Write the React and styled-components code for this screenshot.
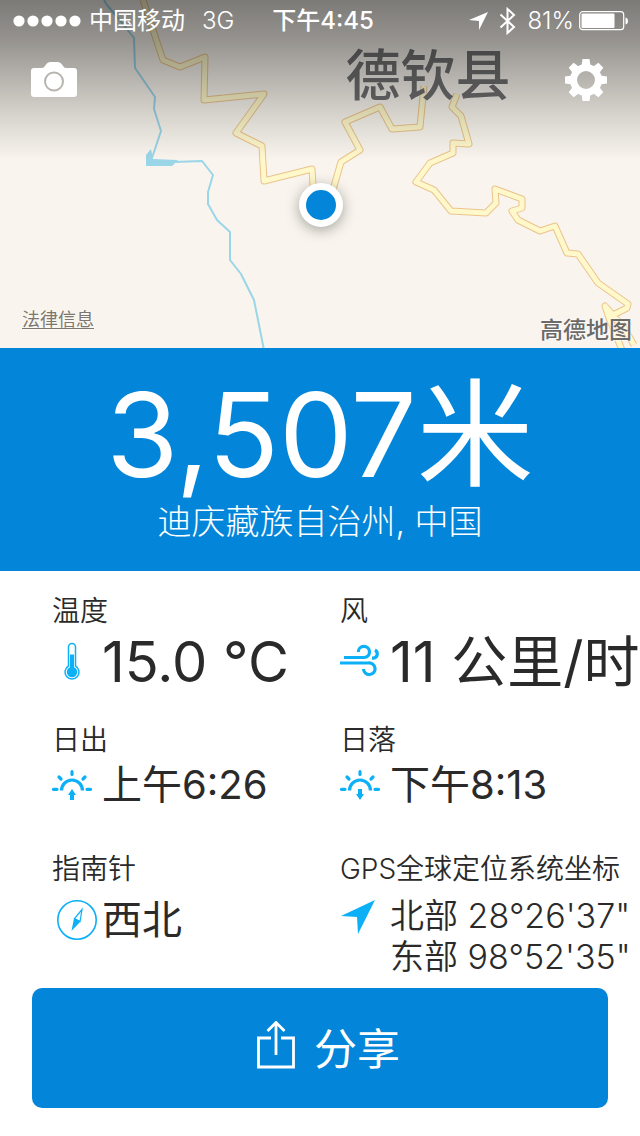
import React from 'react'
import styled, { createGlobalStyle, ThemeProvider } from 'styled-components'

const theme = {
  primary: '#0386d9',
  accent: '#0cb0f7',
  text: '#2a2a2a',
  land: '#f9f5ee',
}

const GlobalStyle = createGlobalStyle`
  * {
    box-sizing: border-box;
  }
  body {
    margin: 0;
    background: #fff;
    font-family: Inter, "Noto Sans CJK SC", sans-serif;
  }
`;

const Page = styled.main`
  min-height: 100vh;
  display: flex;
  flex-direction: column;
  overflow: hidden;
  color: ${({ theme }) => theme.text};
`;

const MapArea = styled.section`
  position: relative;
  min-height: 348px;
  display: flex;
  flex-direction: column;
  background: ${({ theme }) => theme.land};
`;

const MapCanvas = styled.svg`
  position: absolute;
  top: 0;
  left: 0;
  width: 100%;
  height: 100%;
`;

const TownName = styled.span`
  position: absolute;
  top: 37px;
  left: 54%;
  font-size: 55px;
  font-weight: 500;
  line-height: 76px;
  color: #707070;
  text-shadow: 0 0 3px rgba(255, 255, 255, 0.7);
`;

const Shade = styled.div`
  position: absolute;
  top: 0;
  left: 0;
  right: 0;
  height: 160px;
  background: linear-gradient(rgba(0, 0, 0, 0.5), rgba(0, 0, 0, 0.4) 25%, rgba(0, 0, 0, 0.15) 70%, rgba(0, 0, 0, 0));
`;

const Marker = styled.div`
  position: absolute;
  top: 183px;
  left: 50%;
  width: 44px;
  height: 44px;
  margin-left: -21px;
  border: 7px solid #fff;
  border-radius: 50%;
  background: ${({ theme }) => theme.primary};
  box-shadow: 0 3px 14px rgba(0, 0, 0, 0.35);
`;

const StatusBar = styled.header`
  position: relative;
  display: grid;
  grid-template-columns: 1fr auto 1fr;
  align-items: center;
  height: 42px;
  padding: 0 11px 0 13px;
  color: #fff;
  font-size: 24px;
  line-height: 42px;
`;

const StatusGroup = styled.div`
  display: flex;
  align-items: center;
  justify-content: ${({ $end }) => ($end ? 'flex-end' : 'flex-start')};
  gap: ${({ $end }) => ($end ? '11px' : '8px')};
`;

const Network = styled.span`
  margin-left: 9px;
  font-weight: 300;
`;

const Battery = styled.span`
  display: flex;
  align-items: center;
  gap: 5px;
  font-weight: 300;
`;

const Clock = styled.time`
  padding-left: 4px;
  font-weight: 500;
`;

const Toolbar = styled.nav`
  position: relative;
  display: flex;
  align-items: center;
  justify-content: space-between;
  height: 76px;
  padding: 0 32px 0 30px;
`;

const IconButton = styled.button`
  display: flex;
  padding: 0;
  border: 0;
  background: none;
  color: #fff;
`;

const MapFooter = styled.footer`
  position: relative;
  display: flex;
  align-items: flex-end;
  justify-content: space-between;
  margin-top: auto;
  padding: 0 8px 4px 22px;
`;

const LegalLink = styled.a`
  padding-bottom: 11px;
  font-size: 18px;
  line-height: 26px;
  color: #7d776f;
  text-underline-offset: 2px;
  text-shadow: 0 0 2px #fff;
`;

const Provider = styled.span`
  font-size: 23px;
  font-weight: 500;
  line-height: 28px;
  color: #6c6a68;
  text-shadow: 0 0 2px #fff, 0 0 2px #fff;
`;

const Summary = styled.section`
  padding: 22px 0 28px;
  background: ${({ theme }) => theme.primary};
  color: #fff;
  text-align: center;
`;

const Altitude = styled.h1`
  margin: 0;
  font-size: 117px;
  font-weight: 400;
  line-height: 130px;
  white-space: nowrap;
`;

const Place = styled.p`
  margin: 0;
  font-size: 34px;
  font-weight: 300;
  line-height: 43px;
`;

const Details = styled.dl`
  display: grid;
  grid-template-columns: repeat(2, minmax(0, 1fr));
  grid-auto-rows: minmax(129px, auto);
  margin: 0;
  padding: 23px 12px 7px 52px;
`;

const Cell = styled.div`
  white-space: nowrap;
`;

const Label = styled.dt`
  font-size: 28px;
  font-weight: 350;
  line-height: 34px;
`;

const sizes = {
  large: { font: 56, line: 68 },
  medium: { font: 40, line: 56 },
  tall: { font: 40, line: 68 },
};

const Value = styled.dd`
  display: flex;
  align-items: center;
  gap: 10px;
  margin: 0;
  font-size: ${({ $size }) => sizes[$size].font}px;
  line-height: ${({ $size }) => sizes[$size].line}px;
  font-weight: 400;

  svg {
    flex: none;
    overflow: visible;
    color: ${({ theme }) => theme.accent};
  }
`;

const Coordinates = styled.dd`
  display: flex;
  gap: 10px;
  margin: 0;
  padding-top: 9px;
  font-size: 34px;
  font-weight: 350;
  line-height: 41px;

  svg {
    flex: none;
    color: ${({ theme }) => theme.accent};
  }
`;

const Actions = styled.div`
  padding: 0 32px 28px;
`;

const ShareButton = styled.button`
  display: flex;
  align-items: center;
  justify-content: center;
  gap: 18px;
  width: 100%;
  height: 120px;
  padding: 0 0 4px 16px;
  border: 0;
  border-radius: 10px;
  background: ${({ theme }) => theme.primary};
  color: #fff;
  font-family: inherit;
  font-size: 43px;
  font-weight: 400;
`;

const road = [
  'M143 0 163 60 180 67 205 57 204 100 264 94 236 133 262 146 264 181 312 169 314 200',
  'M330 200 341 162 360 150 345 122 380 107 392 129 420 127 424 86',
  'M457 94 452 107 461 116 469 144 453 143 453 153 430 163 416 182 434 190 451 211 486 213 496 203 495 189 522 199 522 208 512 211 518 220 540 231 555 226 567 253 578 254 598 283 628 304 627 308 613 315 605 306 609 318 622 350',
  'M610 314 622 324 634 345',
].join(' ')

const MapDrawing = () => (
  <MapCanvas viewBox="0 0 640 348" preserveAspectRatio="xMidYMid slice" fill="none" strokeLinejoin="round" aria-hidden="true">
    <path d="M104 0 107 5 118 18 134 38 135 68 155 97 154 109 161 131 152 158M174 162 202 161 213 175 208 192 208 204 217 220 230 232 230 260 241 274 254 300 264 350" stroke="#9bd5e8" strokeWidth="2" />
    <path d="M146 166V155L151 149 153 159 178 160 172 166Z" fill="#9bd5e8" />
    <path d={road} stroke="#eac48d" strokeWidth="7" />
    <path d={road} stroke="#fff8cb" strokeWidth="5" />
  </MapCanvas>
)

const SignalDots = () => (
  <svg width="68" height="12" fill="currentColor" aria-hidden="true">
    {[6, 20, 34, 48, 62].map((x) => <circle key={x} cx={x} cy="6" r="5.6" />)}
  </svg>
)

const LocationIcon = () => (
  <svg width="19" height="20" viewBox="0 0 19 20" fill="currentColor" aria-hidden="true">
    <path d="M0 9 19 1 10 19V10Z" />
  </svg>
)

const BluetoothIcon = () => (
  <svg width="17" height="28" viewBox="0 0 17 28" fill="none" stroke="currentColor" strokeWidth="2" aria-hidden="true">
    <path d="M1.500 7.500 15 20 8.500 26V2L15 8 1.500 20.500" />
  </svg>
)

const BatteryIcon = () => (
  <svg width="50" height="20" viewBox="0 0 50 20" aria-hidden="true">
    <rect x=".7" y=".7" width="44" height="18" rx="3" fill="none" stroke="currentColor" strokeWidth="1.200" />
    <rect x="2.500" y="2.500" width="33" height="14.500" rx="1" fill="currentColor" />
    <path d="M46.500 6.500Q49 7 49 10T46.500 13.500Z" fill="currentColor" />
  </svg>
)

const CameraIcon = () => (
  <svg width="48" height="36" viewBox="0 0 48 36" aria-hidden="true">
    <path d="M4 6H12Q14 6 15 4L16 2.500Q17.500 0 20 0H28Q30.500 0 32 2.500L33 4Q34 6 36 6H44Q47 6 47 9V32Q47 35 44 35H4Q1 35 1 32V9Q1 6 4 6Z" fill="currentColor" />
    <circle cx="24" cy="19.500" r="9" fill="none" stroke="#b7b4b0" strokeWidth="2" />
  </svg>
)

const GearIcon = () => (
  <svg width="44" height="44" viewBox="-22 -22 44 44" fill="currentColor" aria-hidden="true">
    <circle r="12.500" fill="none" stroke="currentColor" strokeWidth="7" />
    {[0, 45, 90, 135, 180, 225, 270, 315].map((angle) => (
      <path key={angle} d="M-4.500-14-3.500-21H3.500L4.500-14Z" transform={`rotate(${angle})`} />
    ))}
  </svg>
)

const ThermometerIcon = () => (
  <svg width="40" height="40" viewBox="0 0 40 40" fill="none" stroke="currentColor" aria-hidden="true">
    <path d="M16.500 24V5A3.500 3.500 0 0 1 23.500 5V24A7 7 0 1 1 16.500 24Z" strokeWidth="1.500" />
    <circle cx="20" cy="30" r="5.200" fill="currentColor" stroke="none" />
    <path d="M20 12.500V29" strokeWidth="4" />
  </svg>
)

const WindIcon = () => (
  <svg width="40" height="40" viewBox="0 0 40 40" fill="none" stroke="currentColor" strokeWidth="3.200" aria-hidden="true">
    <path d="M4 15.500H24A5.600 5.600 0 1 0 18.300 10" />
    <path d="M0 21H28.500A5.800 5.800 0 1 1 23.500 27" />
    <path d="M32 16.200H33.500A4.400 4.400 0 0 0 35 8" />
  </svg>
)

const SunIcon = ({ setting }) => (
  <svg width="40" height="40" viewBox="0 0 40 40" fill="none" stroke="currentColor" strokeWidth="3.200" aria-hidden="true">
    <path d="M9.500 25.500A10.500 10.500 0 0 1 30.500 25.500" />
    <path d="M1.500 24.300H5M35 24.300H38.500M20 6.500V9.500M7 12 9 14M33 12 31 14" strokeLinecap="round" />
    <path
      d="M18 35V30H16L20 24 24 30H22V35Z"
      fill="currentColor"
      stroke="none"
      transform={setting ? 'rotate(180 20 29.500)' : undefined}
    />
  </svg>
)

const CompassIcon = () => (
  <svg width="40" height="40" viewBox="-5 0 40 40" fill="none" stroke="currentColor" aria-hidden="true">
    <circle cx="20" cy="20" r="19.200" strokeWidth="1.600" />
    <path d="M25 9.500 17.500 18.500 23 21.500Z" strokeWidth="1.200" />
    <path d="M17 18 23.500 21.500 14.500 31Z" fill="currentColor" stroke="none" />
  </svg>
)

const ArrowIcon = () => (
  <svg width="40" height="40" viewBox="0 0 40 40" fill="currentColor" aria-hidden="true">
    <path d="M1 21 35 5 18 39 17 22Z" />
  </svg>
)

const ShareIcon = () => (
  <svg width="40" height="50" viewBox="0 0 40 50" fill="none" stroke="currentColor" strokeWidth="2.800" aria-hidden="true">
    <path d="M15 17H2.500V46H37.500V17H25" />
    <path d="M20 34V2M11.500 10 20 1.500 28.500 10" />
  </svg>
)

const App = () => {
  return (
    <ThemeProvider theme={theme}>
      <GlobalStyle />
      <Page lang="zh-CN">
        <MapArea>
          <MapDrawing />
          <TownName>德钦县</TownName>
          <Shade />
          <Marker />
          <StatusBar>
            <StatusGroup>
              <SignalDots />
              <span>中国移动</span>
              <Network>3G</Network>
            </StatusGroup>
            <Clock>下午4:45</Clock>
            <StatusGroup $end>
              <LocationIcon />
              <BluetoothIcon />
              <Battery>
                81%
                <BatteryIcon />
              </Battery>
            </StatusGroup>
          </StatusBar>
          <Toolbar>
            <IconButton type="button" aria-label="相机"><CameraIcon /></IconButton>
            <IconButton type="button" aria-label="设置"><GearIcon /></IconButton>
          </Toolbar>
          <MapFooter>
            <LegalLink href="#legal">法律信息</LegalLink>
            <Provider>高德地图</Provider>
          </MapFooter>
        </MapArea>

        <Summary>
          <Altitude>3,507米</Altitude>
          <Place>迪庆藏族自治州, 中国</Place>
        </Summary>

        <Details>
          <Cell>
            <Label>温度</Label>
            <Value $size="large"><ThermometerIcon />15.0 °C</Value>
          </Cell>
          <Cell>
            <Label>风</Label>
            <Value $size="large"><WindIcon />11 公里/时</Value>
          </Cell>
          <Cell>
            <Label>日出</Label>
            <Value $size="medium"><SunIcon />上午6:26</Value>
          </Cell>
          <Cell>
            <Label>日落</Label>
            <Value $size="medium"><SunIcon setting />下午8:13</Value>
          </Cell>
          <Cell>
            <Label>指南针</Label>
            <Value $size="tall"><CompassIcon />西北</Value>
          </Cell>
          <Cell>
            <Label>GPS全球定位系统坐标</Label>
            <Coordinates>
              <ArrowIcon />
              <div>
                <div>北部 28°26'37"</div>
                <div>东部 98°52'35"</div>
              </div>
            </Coordinates>
          </Cell>
        </Details>

        <Actions>
          <ShareButton type="button"><ShareIcon />分享</ShareButton>
        </Actions>
      </Page>
    </ThemeProvider>
  )
}

export default App
